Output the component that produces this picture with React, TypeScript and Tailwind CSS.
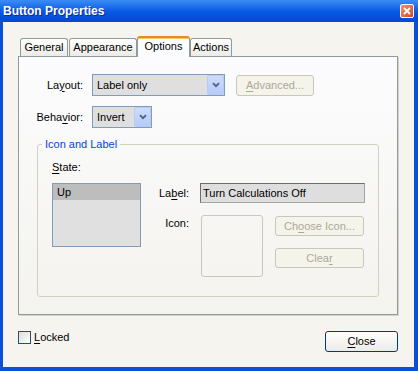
import React from 'react';

const U = ({ children }: { children: React.ReactNode }) => (
  <span className="underline underline-offset-[2px]">{children}</span>
);

const Chevron = () => (
  <svg width="8" height="6" viewBox="0 0 8 6">
    <path d="M1 1.2 L4 4.2 L7 1.2" fill="none" stroke="#4d6185" strokeWidth="1.8" />
  </svg>
);

const Combo = ({ value, className }: { value: string; className: string }) => (
  <div className={`${className} h-[22px] border border-[#7f9db9] bg-[#dfdfdf] flex items-center`}>
    <span className="flex-1 pl-[4px] whitespace-nowrap">{value}</span>
    <div className="w-[17px] h-[20px] rounded-[2px] border border-[#b7cbf5] bg-gradient-to-b from-[#cddcfc] to-[#b6cbf8] flex items-center justify-center">
      <Chevron />
    </div>
  </div>
);

const tabs = [
  { label: 'General', className: 'w-[48px]' },
  { label: 'Appearance', className: 'ml-[1px] w-[68px]' },
  { label: 'Options', className: 'w-[53px]', active: true },
  { label: 'Actions', className: 'w-[42px]' },
];

const ButtonProperties = () => {
  return (
    <div className="w-[418px] h-[371px] flex flex-col bg-[#0a4fd8] font-['Liberation_Sans',Arial,sans-serif] text-[11px] leading-[13px] text-black select-none">
      {/* Title bar */}
      <div className="h-[22px] shrink-0 flex items-center justify-between pl-[3px] pr-[4px] bg-gradient-to-b from-[#3b8cf5] via-[#0a5ae6] to-[#0048d4]">
        <span className="text-white font-bold text-[12px] leading-[14px] [text-shadow:1px_1px_0_#0c2a9e]">
          Button Properties
        </span>
        <div className="w-[14px] h-[14px] rounded-[2px] border border-white bg-gradient-to-br from-[#f2906f] to-[#d8431e] flex items-center justify-center">
          <svg width="8" height="8" viewBox="0 0 8 8">
            <path d="M1 1 L7 7 M7 1 L1 7" stroke="white" strokeWidth="1.8" />
          </svg>
        </div>
      </div>

      {/* Body */}
      <div className="flex-1 ml-[3px] mr-[4px] mb-[4px] bg-[#f5f4ef] pt-[14px] pl-[15px] pr-[16px] flex flex-col">
        {/* Tabs */}
        <div className="flex items-end pl-[2px] h-[20px]">
          {tabs.map((tab) =>
            tab.active ? (
              <div
                key={tab.label}
                className={`${tab.className} relative z-10 h-[21px] -mb-[1px] border border-b-0 border-[#919b9c] border-t-2 border-t-[#e68b2c] rounded-t-[3px] bg-[#fcfcfe] shadow-[inset_0_1px_0_#ffc85a] flex items-center justify-center pb-[2px]`}
              >
                {tab.label}
              </div>
            ) : (
              <div
                key={tab.label}
                className={`${tab.className} h-[18px] border border-b-0 border-[#919b9c] rounded-t-[3px] bg-gradient-to-b from-white to-[#ecebe5] flex items-center justify-center`}
              >
                {tab.label}
              </div>
            )
          )}
        </div>

        {/* Tab panel */}
        <div className="h-[259px] border border-[#919b9c] bg-gradient-to-b from-[#fcfcfe] to-[#f4f3ee] pt-[17px] px-[18px] shadow-[1px_1px_0_#d5d3c9]">
          <div className="flex items-center">
            <div className="w-[46px] flex justify-end">
              <span className="whitespace-nowrap shrink-0">La<U>y</U>out:</span>
            </div>
            <Combo value="Label only" className="ml-[9px] w-[133px]" />
            <button
              disabled
              className="ml-[11px] w-[78px] h-[21px] border border-[#c9c7ba] rounded-[3px] bg-[#f5f4ea] text-[#aca899] flex items-center justify-center"
            >
              <span><U>A</U>dvanced...</span>
            </button>
          </div>

          <div className="mt-[10px] flex items-center">
            <div className="w-[46px] flex justify-end">
              <span className="whitespace-nowrap shrink-0">Beha<U>v</U>ior:</span>
            </div>
            <Combo value="Invert" className="ml-[9px] w-[60px]" />
          </div>

          {/* Icon and Label group */}
          <fieldset className="mt-[10px] border border-[#d0d0bf] rounded-[3px]">
            <legend className="ml-[4px] px-[3px] text-[#0046d5]">Icon and Label</legend>
            <div className="pl-[14px] pt-[10px] pb-[19px]">
              <div><U>S</U>tate:</div>
              <div className="mt-[9px] flex">
                <div className="w-[89px] h-[64px] border border-[#7f9db9] bg-[#e0e0e0]">
                  <div className="h-[16px] bg-[#bdbdbd] pl-[4px] flex items-center">Up</div>
                </div>
                <div className="flex flex-col">
                  <div className="flex items-center h-[20px]">
                    <div className="w-[48px] text-right">La<U>b</U>el:</div>
                    <div className="ml-[11px] w-[165px] h-[20px] border border-[#a5a5a5] border-t-[#6f6f6f] border-l-[#6f6f6f] bg-[#dedede] pl-[2px] flex items-center">
                      Turn Calculations Off
                    </div>
                  </div>
                  <div className="mt-[12px] flex items-start">
                    <div className="w-[48px] text-right pt-[2px]">Icon:</div>
                    <div className="ml-[12px] w-[62px] h-[62px] border border-[#cac8bb] rounded-[3px]" />
                    <div className="ml-[12px] flex flex-col pt-[1px]">
                      <button
                        disabled
                        className="w-[89px] h-[20px] border border-[#c9c7ba] rounded-[3px] bg-[#f5f4ea] text-[#aca899] flex items-center justify-center"
                      >
                        <span>Ch<U>o</U>ose Icon...</span>
                      </button>
                      <button
                        disabled
                        className="mt-[12px] w-[89px] h-[20px] border border-[#c9c7ba] rounded-[3px] bg-[#f5f4ea] text-[#aca899] flex items-center justify-center"
                      >
                        <span>Clea<U>r</U></span>
                      </button>
                    </div>
                  </div>
                </div>
              </div>
            </div>
          </fieldset>
        </div>

        {/* Bottom row */}
        <div className="mt-[16px] flex items-start justify-between">
          <div className="flex items-center">
            <div className="w-[13px] h-[13px] border border-[#1c5180] bg-gradient-to-br from-[#dcdcd7] to-white" />
            <span className="ml-[3px]"><U>L</U>ocked</span>
          </div>
          <button className="w-[73px] h-[21px] border border-[#003c74] rounded-[3px] bg-gradient-to-b from-white to-[#ecebe6] flex items-center justify-center">
            <span><U>C</U>lose</span>
          </button>
        </div>
      </div>
    </div>
  );
};

export default ButtonProperties;
